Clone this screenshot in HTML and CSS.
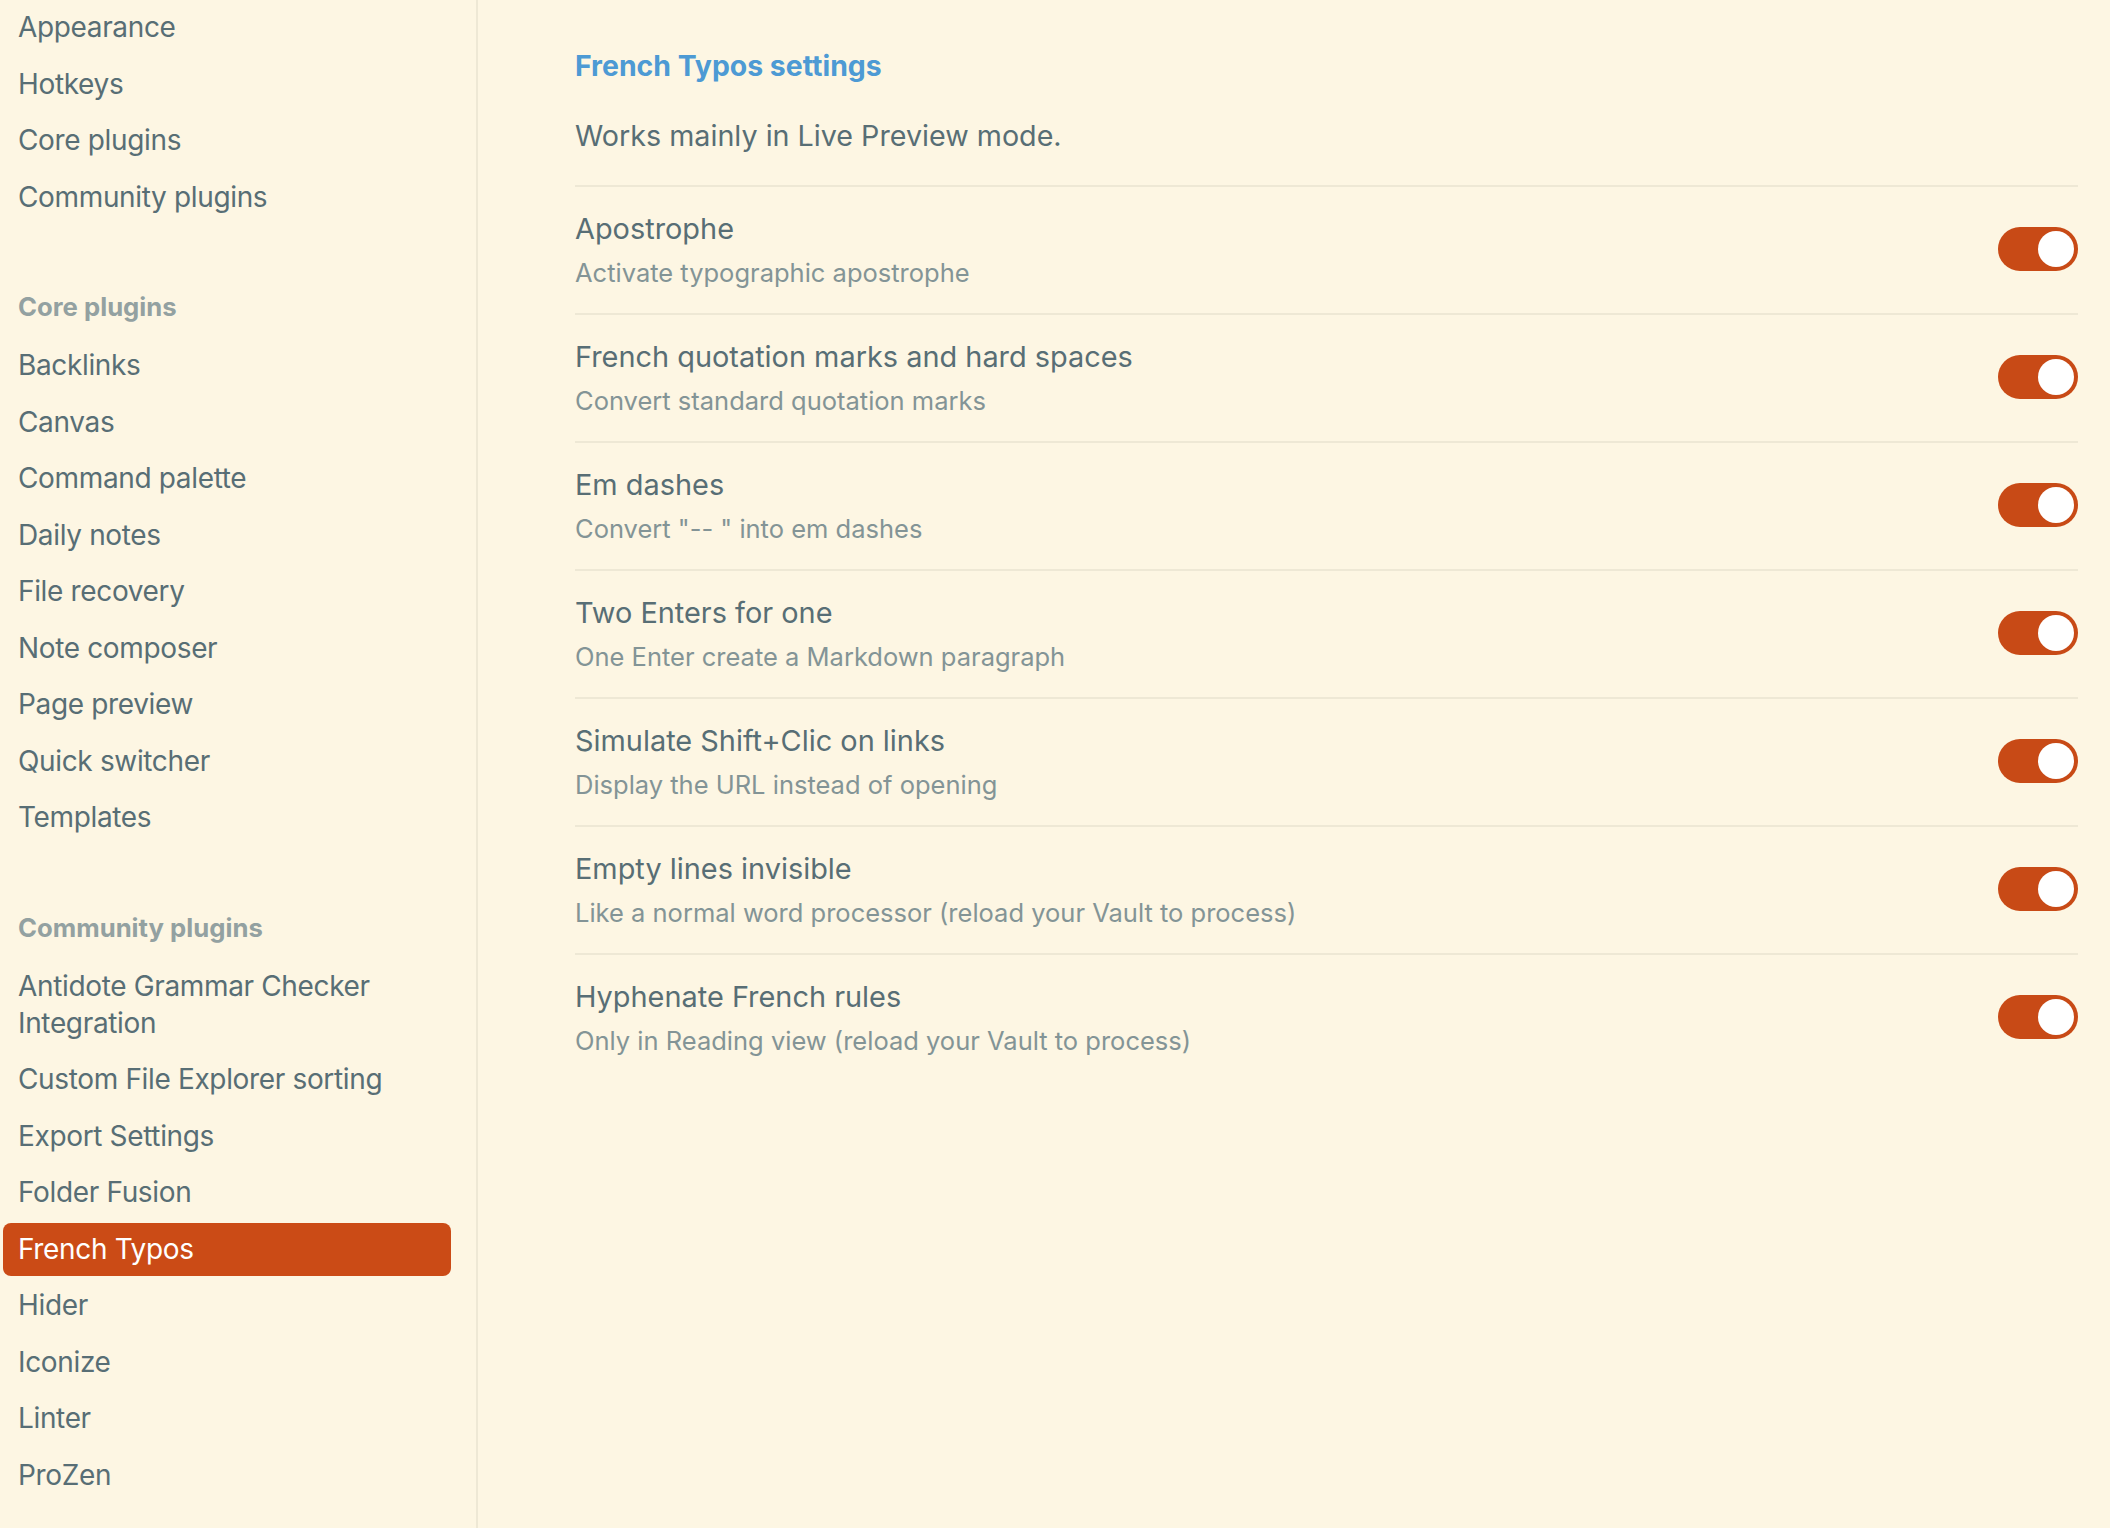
FILE: index.html
```html
<!DOCTYPE html>
<html lang="en">
<head>
<meta charset="utf-8">
<title>French Typos settings</title>
<link rel="stylesheet" href="styles.css">
</head>
<body>
<div class="app">
  <nav class="sidebar">
    <div class="group first">
      <div class="item">Appearance</div>
      <div class="item">Hotkeys</div>
      <div class="item">Core plugins</div>
      <div class="item">Community plugins</div>
    </div>
    <div class="group">
      <div class="group-title">Core plugins</div>
      <div class="item">Backlinks</div>
      <div class="item">Canvas</div>
      <div class="item">Command palette</div>
      <div class="item">Daily notes</div>
      <div class="item">File recovery</div>
      <div class="item">Note composer</div>
      <div class="item">Page preview</div>
      <div class="item">Quick switcher</div>
      <div class="item">Templates</div>
    </div>
    <div class="group">
      <div class="group-title">Community plugins</div>
      <div class="item">Antidote Grammar Checker Integration</div>
      <div class="item">Custom File Explorer sorting</div>
      <div class="item">Export Settings</div>
      <div class="item">Folder Fusion</div>
      <div class="item active">French Typos</div>
      <div class="item">Hider</div>
      <div class="item">Iconize</div>
      <div class="item">Linter</div>
      <div class="item">ProZen</div>
    </div>
  </nav>
  <main class="content">
    <h2 class="title">French Typos settings</h2>
    <p class="intro">Works mainly in Live Preview mode.</p>
    <div class="setting">
      <div class="info"><div class="name">Apostrophe</div><div class="desc">Activate typographic apostrophe</div></div>
      <div class="toggle on"><span class="knob"></span></div>
    </div>
    <div class="setting">
      <div class="info"><div class="name">French quotation marks and hard spaces</div><div class="desc">Convert standard quotation marks</div></div>
      <div class="toggle on"><span class="knob"></span></div>
    </div>
    <div class="setting">
      <div class="info"><div class="name">Em dashes</div><div class="desc">Convert "-- " into em dashes</div></div>
      <div class="toggle on"><span class="knob"></span></div>
    </div>
    <div class="setting">
      <div class="info"><div class="name">Two Enters for one</div><div class="desc">One Enter create a Markdown paragraph</div></div>
      <div class="toggle on"><span class="knob"></span></div>
    </div>
    <div class="setting">
      <div class="info"><div class="name">Simulate Shift+Clic on links</div><div class="desc">Display the URL instead of opening</div></div>
      <div class="toggle on"><span class="knob"></span></div>
    </div>
    <div class="setting">
      <div class="info"><div class="name">Empty lines invisible</div><div class="desc">Like a normal word processor (reload your Vault to process)</div></div>
      <div class="toggle on"><span class="knob"></span></div>
    </div>
    <div class="setting">
      <div class="info"><div class="name">Hyphenate French rules</div><div class="desc">Only in Reading view (reload your Vault to process)</div></div>
      <div class="toggle on"><span class="knob"></span></div>
    </div>
  </main>
</div>
</body>
</html>
```
FILE: styles.css
```css
html, body {
  margin: 0;
  padding: 0;
  background: #fdf6e3;
}
body {
  font-family: Inter, "Noto Sans", "Liberation Sans", sans-serif;
  color: #586e75;
  width: 2110px;
  height: 1528px;
  overflow: hidden;
}
.app {
  display: flex;
  height: 1528px;
}
.sidebar {
  box-sizing: border-box;
  width: 478px;
  flex: 0 0 478px;
  border-right: 2px solid #eee8d5;
  padding: 1px 25px 0 3px;
}
.group {
  margin-top: 64.5px;
}
.group.first {
  margin-top: 0;
}
.group-title {
  font-size: 25.7px;
  font-weight: 700;
  line-height: 37px;
  color: #93a1a1;
  padding: 0 15px;
  margin-bottom: 14px;
}
.item {
  font-size: 28px;
  letter-spacing: -0.35px;
  line-height: 37px;
  padding: 8px 15px;
  margin-bottom: 3.5px;
  border-radius: 8px;
  color: #586e75;
}
.item.active {
  background: #cb4b16;
  color: #ffffff;
}
.content {
  flex: 1;
  padding: 46px 32px 0 97px;
}
.title {
  margin: 0;
  font-size: 28.4px;
  line-height: 40px;
  font-weight: 700;
  color: #4d9ad4;
}
.intro {
  margin: 30px 0 29px;
  font-size: 28.7px;
  line-height: 40px;
  color: #586e75;
}
.setting {
  display: flex;
  align-items: center;
  justify-content: space-between;
  border-top: 2px solid #eee8d5;
  padding: 22px 0 20px;
}
.name {
  font-size: 28.9px;
  line-height: 40px;
  color: #586e75;
}
.desc {
  margin-top: 4px;
  font-size: 25.5px;
  line-height: 40px;
  color: #839496;
}
.toggle {
  width: 80px;
  height: 44px;
  border-radius: 22px;
  background: #c84a16;
  display: flex;
  align-items: center;
  justify-content: flex-end;
  padding: 0 4px;
  box-sizing: border-box;
  margin-top: -4px;
}
.knob {
  width: 36px;
  height: 36px;
  border-radius: 50%;
  background: #ffffff;
}
```
